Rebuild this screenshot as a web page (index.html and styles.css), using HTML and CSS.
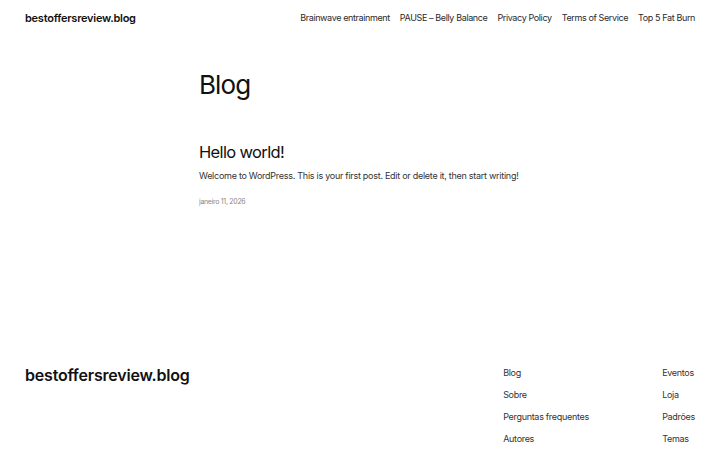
FILE: index.html
```html
<!DOCTYPE html>
<html lang="pt">
<head>
<meta charset="utf-8">
<title>Blog – bestoffersreview.blog</title>
<link rel="stylesheet" href="styles.css">
</head>
<body>
<header class="site-header">
  <a class="site-title" href="#">bestoffersreview.blog</a>
  <nav class="main-nav">
    <a href="#">Brainwave entrainment</a>
    <a href="#">PAUSE – Belly Balance</a>
    <a href="#">Privacy Policy</a>
    <a href="#">Terms of Service</a>
    <a href="#">Top 5 Fat Burn</a>
  </nav>
</header>
<main class="content">
  <h1 class="page-title">Blog</h1>
  <article class="post">
    <h2 class="post-title">Hello world!</h2>
    <p class="post-excerpt">Welcome to WordPress. This is your first post. Edit or delete it, then start writing!</p>
    <div class="post-date">janeiro 11, 2026</div>
  </article>
</main>
<footer class="site-footer">
  <a class="footer-title" href="#">bestoffersreview.blog</a>
  <div class="footer-links">
    <div class="footer-col">
      <a href="#">Blog</a>
      <a href="#">Sobre</a>
      <a href="#">Perguntas frequentes</a>
      <a href="#">Autores</a>
    </div>
    <div class="footer-col">
      <a href="#">Eventos</a>
      <a href="#">Loja</a>
      <a href="#">Padrões</a>
      <a href="#">Temas</a>
    </div>
  </div>
</footer>
</body>
</html>
```
FILE: styles.css
```css
html, body {
  margin: 0;
  padding: 0;
  background: #fff;
}
body {
  font-family: Inter, "Noto Sans", sans-serif;
  color: #111;
  width: 720px;
  height: 450px;
  overflow: hidden;
}
a {
  color: inherit;
  text-decoration: none;
}
.site-header {
  display: flex;
  justify-content: space-between;
  align-items: center;
  height: 35px;
  padding: 0 25px;
}
.site-title {
  font-size: 11px;
  font-weight: 600;
  letter-spacing: -0.25px;
  color: #111;
}
.main-nav {
  display: flex;
  gap: 10px;
  font-size: 9px;
  letter-spacing: -0.38px;
  color: #2a2a2a;
  white-space: nowrap;
}
.content {
  width: 322px;
  margin: 0 auto;
  padding-top: 33px;
  height: 248px;
}
.page-title {
  margin: 0;
  font-size: 26px;
  font-weight: 400;
  letter-spacing: -0.9px;
  line-height: 34px;
}
.post {
  margin-top: 39px;
}
.post-title {
  margin: 0;
  font-size: 16.5px;
  font-weight: 400;
  letter-spacing: -0.65px;
  line-height: 22px;
}
.post-excerpt {
  margin: 6px 0 0;
  font-size: 9px;
  letter-spacing: -0.27px;
  line-height: 14px;
  color: #333;
  white-space: nowrap;
}
.post-date {
  margin-top: 14px;
  font-size: 7px;
  letter-spacing: -0.3px;
  color: #888;
}
.site-footer {
  display: flex;
  justify-content: space-between;
  align-items: flex-start;
  padding: 48px 25px 0;
}
.footer-title {
  font-size: 16px;
  font-weight: 600;
  letter-spacing: -0.2px;
  line-height: 22px;
}
.footer-links {
  display: grid;
  grid-template-columns: 159px auto;
  padding-top: 2px;
}
.footer-col {
  display: flex;
  flex-direction: column;
  gap: 8px;
  font-size: 9px;
  letter-spacing: -0.3px;
  line-height: 14px;
  color: #333;
  white-space: nowrap;
}
```
